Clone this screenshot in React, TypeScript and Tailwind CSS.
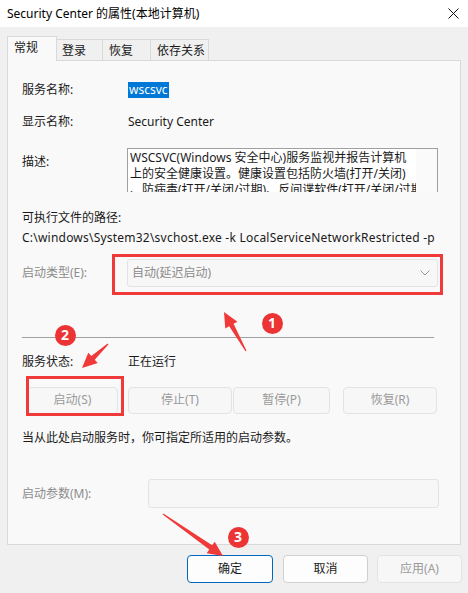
import React from "react"

const font = { fontFamily: '"Noto Sans", "Noto Sans CJK SC", sans-serif' }

function arrowPoints(tx: number, ty: number, hx: number, hy: number) {
  const dx = hx - tx
  const dy = hy - ty
  const len = Math.sqrt(dx * dx + dy * dy)
  const ux = dx / len
  const uy = dy / len
  const nx = -uy
  const ny = ux
  const head = 15
  const bx = hx - ux * head
  const by = hy - uy * head
  const pts = [
    [tx + nx * 0.6, ty + ny * 0.6],
    [bx + nx * 2.5, by + ny * 2.5],
    [bx + nx * 7, by + ny * 7],
    [hx, hy],
    [bx - nx * 7, by - ny * 7],
    [bx - nx * 2.5, by - ny * 2.5],
    [tx - nx * 0.6, ty - ny * 0.6],
  ]
  return pts.map((p) => p.join(",")).join(" ")
}

function Badge({ n, x, y }: { n: string; x: number; y: number }) {
  return (
    <div
      className="absolute w-[21px] h-[21px] rounded-full bg-[#ec3434] text-white text-[14px] font-bold flex items-center justify-center leading-none"
      style={{ left: x - 10.5, top: y - 10.5 }}
    >
      {n}
    </div>
  )
}

export default function App() {
  return (
    <div className="relative w-[468px] h-[593px] bg-[#f0f0f0] text-[12px] text-[#1a1a1a] overflow-hidden" style={font}>
      {/* Title bar */}
      <div className="h-[27px] bg-white flex items-center pl-[7px] pr-[9px]">
        <span className="flex-1 text-[12px] text-black">Security Center 的属性(本地计算机)</span>
        <svg width="11" height="11" viewBox="0 0 11 11">
          <path d="M0.5 0.5 L10.5 10.5 M10.5 0.5 L0.5 10.5" stroke="#111" strokeWidth="1" />
        </svg>
      </div>

      {/* Tabs */}
      <div className="flex items-end pl-[7px] mt-[9px] h-[25px] relative z-10">
        <div className="w-[50px] h-[25px] bg-[#f9f9f9] border border-b-0 border-[#d9d9d9] pl-[6px] pt-[2px]">常规</div>
        <div className="w-[46px] h-[22px] border border-l-0 border-[#d9d9d9] pl-[5px] pt-[2px]">登录</div>
        <div className="w-[48px] h-[22px] border border-l-0 border-[#d9d9d9] pl-[6px] pt-[2px]">恢复</div>
        <div className="w-[58px] h-[22px] border border-l-0 border-[#d9d9d9] pl-[6px] pt-[2px]">依存关系</div>
      </div>

      {/* Panel */}
      <div className="ml-[7px] w-[454px] h-[485px] -mt-[1px] bg-[#f9f9f9] border border-[#d9d9d9] pl-[14px] flex flex-col">
        <div className="flex items-center h-[16px] mt-[21px]">
          <span className="w-[106px]">服务名称:</span>
          <span className="bg-[#0078d7] text-white px-[1px] h-[16px] leading-[16px]">wscsvc</span>
        </div>
        <div className="flex items-center h-[16px] mt-[16px]">
          <span className="w-[106px]">显示名称:</span>
          <span>Security Center</span>
        </div>
        <div className="flex items-start mt-[18px]">
          <span className="w-[105px] pt-[5px]">描述:</span>
          <div className="w-[311px] h-[44px] bg-white border-t border-l border-r border-[#a0a0a0] flex overflow-hidden">
            <div className="flex-1 px-[2px] leading-[16px] pt-[1px] whitespace-nowrap overflow-hidden">
              WSCSVC(Windows 安全中心)服务监视并报告计算机
              <br />
              上的安全健康设置。健康设置包括防火墙(打开/关闭)
              <br />
              、防病毒(打开/关闭/过期)、反间谍软件(打开/关闭/过期)
            </div>
            <div className="w-[21px] bg-[#fafafa]"></div>
          </div>
        </div>
        <div className="h-[16px] leading-[16px] mt-[18px]">可执行文件的路径:</div>
        <div className="h-[16px] leading-[16px] mt-[4px] tracking-[0.22px] whitespace-nowrap">C:\windows\System32\svchost.exe -k LocalServiceNetworkRestricted -p</div>
        <div className="flex items-center mt-[13px]">
          <span className="w-[105px] text-[#8c8c8c]">启动类型(E):</span>
          <div className="w-[311px] h-[28px] border border-[#e3e3e3] bg-[#f7f7f7] rounded-[3px] flex items-center pl-[4px] pr-[7px] text-[#8c8c8c]">
            <span className="flex-1">自动(延迟启动)</span>
            <svg width="10" height="6" viewBox="0 0 10 6">
              <path d="M0.5 0.5 L5 5 L9.5 0.5" fill="none" stroke="#9a9a9a" strokeWidth="1" />
            </svg>
          </div>
        </div>
        <div className="w-[412px] h-[1px] bg-[#a0a0a0] mt-[50px]"></div>
        <div className="flex items-center h-[16px] mt-[16px]">
          <span className="w-[106px]">服务状态:</span>
          <span>正在运行</span>
        </div>
        <div className="flex items-center h-[28px] mt-[16px] text-[#9a9a9a]">
          <div className="ml-[5px] w-[91px] h-[27px] border border-[#e3e3e3] bg-[#f7f7f7] rounded-[4px] flex items-center justify-center">启动(S)</div>
          <div className="ml-[10px] w-[104px] h-[27px] border border-[#e3e3e3] bg-[#f7f7f7] rounded-[4px] flex items-center justify-center">停止(T)</div>
          <div className="ml-[1px] w-[97px] h-[27px] border border-[#e3e3e3] bg-[#f7f7f7] rounded-[4px] flex items-center justify-center">暂停(P)</div>
          <div className="ml-[13px] w-[94px] h-[27px] border border-[#e3e3e3] bg-[#f7f7f7] rounded-[4px] flex items-center justify-center">恢复(R)</div>
        </div>
        <div className="h-[16px] leading-[16px] mt-[16px]">当从此处启动服务时，你可指定所适用的启动参数。</div>
        <div className="flex items-center mt-[33px]">
          <span className="w-[126px] text-[#8c8c8c]">启动参数(M):</span>
          <div className="w-[291px] h-[29px] border border-[#e3e3e3] bg-[#f7f7f7] rounded-[3px]"></div>
        </div>
      </div>

      {/* Dialog buttons */}
      <div className="flex items-center mt-[10px] pl-[187px] h-[28px]">
        <div className="w-[86px] h-[28px] border border-[#0067c0] bg-[#fdfdfd] rounded-[4px] flex items-center justify-center">确定</div>
        <div className="ml-[10px] w-[85px] h-[28px] border border-[#d0d0d0] bg-[#fdfdfd] rounded-[4px] flex items-center justify-center">取消</div>
        <div className="ml-[9px] w-[85px] h-[28px] border border-[#e3e3e3] bg-[#f7f7f7] rounded-[4px] flex items-center justify-center text-[#9a9a9a]">应用(A)</div>
      </div>

      {/* Annotations */}
      <div className="absolute left-[112px] top-[254px] w-[331px] h-[41px] border-[3px] border-[#f03a3a]"></div>
      <div className="absolute left-[26px] top-[376px] w-[98px] h-[40px] border-[3px] border-[#f03a3a]"></div>
      <svg className="absolute inset-0 pointer-events-none" width="468" height="593">
        <polygon points={arrowPoints(246, 351, 224, 312)} fill="#f03a3a" />
        <polygon points={arrowPoints(108, 344, 82, 368)} fill="#f03a3a" />
        <polygon points={arrowPoints(163, 514, 223, 556)} fill="#f03a3a" />
      </svg>
      <Badge n="1" x={272} y={323} />
      <Badge n="2" x={65} y={335} />
      <Badge n="3" x={238} y={537} />
    </div>
  )
}
